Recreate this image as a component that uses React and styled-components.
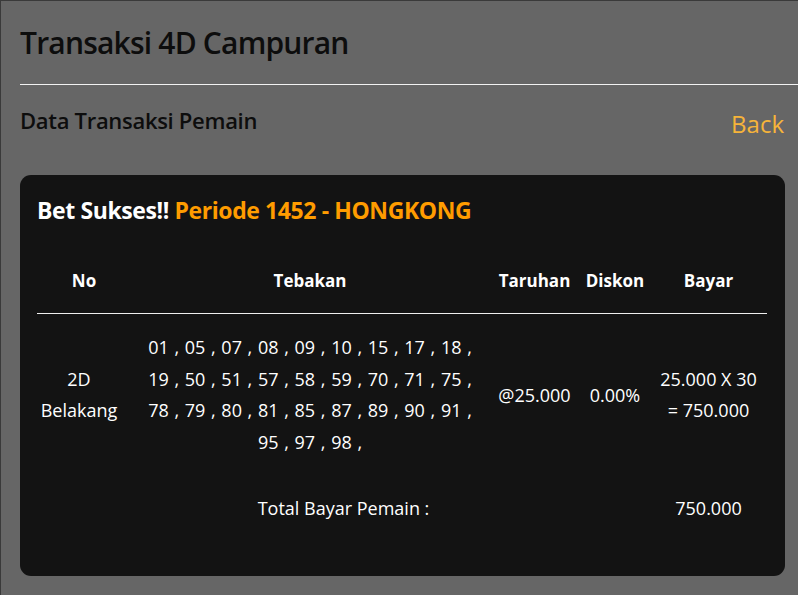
import styled, { createGlobalStyle } from "styled-components";

const GlobalStyle = createGlobalStyle`
  html, body {
    margin: 0;
    padding: 0;
    background: #666666;
  }
  body {
    font-family: "Open Sans", "Noto Sans", Arial, sans-serif;
  }
`;

const Page = styled.div`
  min-height: 595px;
  box-sizing: border-box;
  border-top: 1px solid #3a3a3a;
  border-left: 1px solid #3a3a3a;
  padding: 0 13px 0 19px;
  overflow: hidden;
`;

const Title = styled.h1`
  margin: 0;
  padding-top: 22px;
  font-size: 30px;
  font-weight: 600;
  color: #0d0d0d;
  line-height: 40px;
  letter-spacing: -0.8px;
`;

const Divider = styled.hr`
  margin: 21px -13px 0 0;
  border: 0;
  border-top: 1px solid #f2f2f2;
`;

const SubBar = styled.div`
  display: flex;
  justify-content: space-between;
  align-items: flex-start;
  margin-top: 20px;
  padding-right: 1px;
`;

const SubTitle = styled.h3`
  margin: 0;
  font-size: 22px;
  font-weight: 600;
  color: #0d0d0d;
  line-height: 30px;
  letter-spacing: -0.3px;
`;

const BackLink = styled.a`
  margin-top: 4px;
  font-size: 24px;
  color: #f6b43a;
  text-decoration: none;
  line-height: 30px;
  cursor: pointer;
`;

const Card = styled.div`
  margin-top: 36px;
  background: #131313;
  border-radius: 11px;
  padding: 20px 17px 34px;
`;

const CardHead = styled.h2`
  margin: 0;
  font-size: 23px;
  font-weight: 700;
  line-height: 30px;
  color: #fff;
  letter-spacing: -0.4px;
`;

const Periode = styled.span`
  color: #ff9c00;
`;

const Table = styled.table`
  width: 730px;
  margin-top: 29px;
  border-collapse: collapse;
  table-layout: fixed;
  color: #fff;
  font-size: 18px;
`;

const Th = styled.th`
  width: ${(p) => p.w}px;
  padding: 15px 0 20px;
  line-height: 24px;
  font-size: 17px;
  font-weight: 700;
  text-align: center;
  border-bottom: 1px solid #eee;
`;

const Td = styled.td`
  text-align: center;
  vertical-align: middle;
  padding: ${(p) => (p.total ? "18px 0" : "18px 0 17px")};
  padding-right: ${(p) => (p.lead ? "10px" : "0")};
  line-height: ${(p) => (p.tall ? "31.5px" : "31px")};
  word-spacing: ${(p) => (p.tall ? "1px" : "0")};
`;

const numbers = [
  "01", "05", "07", "08", "09", "10", "15", "17", "18",
  "19", "50", "51", "57", "58", "59", "70", "71", "75",
  "78", "79", "80", "81", "85", "87", "89", "90", "91",
  "95", "97", "98",
];

// nine numbers per line, each followed by a comma
const lines = [];
for (let i = 0; i < numbers.length; i += 9) {
  lines.push(numbers.slice(i, i + 9).map((n) => n + " ,").join(" "));
}

export default function App() {
  return (
    <>
      <GlobalStyle />
      <Page>
        <Title>Transaksi 4D Campuran</Title>
        <Divider />
        <SubBar>
          <SubTitle>Data Transaksi Pemain</SubTitle>
          <BackLink>Back</BackLink>
        </SubBar>
        <Card>
          <CardHead>
            Bet Sukses!! <Periode>Periode 1452 - HONGKONG</Periode>
          </CardHead>
          <Table>
            <thead>
              <tr>
                <Th w={94}>No</Th>
                <Th w={358}>Tebakan</Th>
                <Th w={91}>Taruhan</Th>
                <Th w={70}>Diskon</Th>
                <Th w={117}>Bayar</Th>
              </tr>
            </thead>
            <tbody>
              <tr>
                <Td lead>
                  2D
                  <br />
                  Belakang
                </Td>
                <Td tall>
                  {lines.map((l) => (
                    <div key={l}>{l}</div>
                  ))}
                </Td>
                <Td>@25.000</Td>
                <Td>0.00%</Td>
                <Td>
                  25.000 X 30
                  <br />= 750.000
                </Td>
              </tr>
              <tr>
                <Td total colSpan={4}>
                  Total Bayar Pemain :
                </Td>
                <Td total>750.000</Td>
              </tr>
            </tbody>
          </Table>
        </Card>
      </Page>
    </>
  );
}
